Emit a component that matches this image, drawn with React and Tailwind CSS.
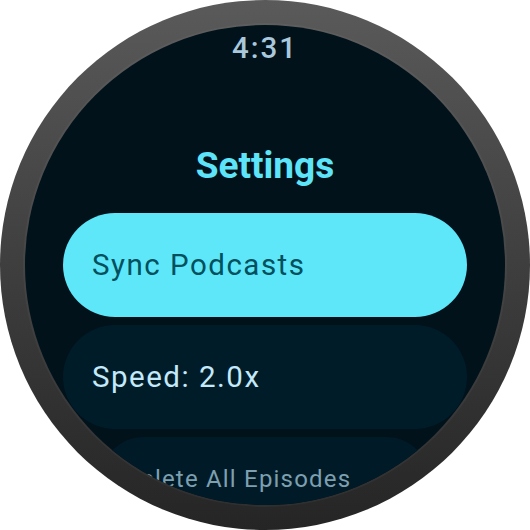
export default function App() {
  const font = { fontFamily: 'Roboto, "Noto Sans", sans-serif' };
  return (
    <div className="w-[530px] h-[530px] bg-white" style={font}>
      <div className="w-[530px] h-[530px] rounded-full bg-gradient-to-b from-[#5a5a5a] to-[#252525] p-[25px]">
        <div className="w-[480px] h-[480px] rounded-full bg-[#01121b] overflow-hidden flex flex-col items-center shadow-[0_0_0_2px_rgba(255,255,255,0.04)]">
          <div className="mt-[6px] text-[29.5px] leading-[34px] font-medium tracking-[2px] text-[#a9c8dc]">
            4:31
          </div>
          <div className="mt-[79px] text-[37px] leading-[43px] font-bold text-[#5de4f8]">
            Settings
          </div>
          <div className="mt-[26px] flex flex-col items-center gap-[8px]">
            <div className="w-[404px] h-[104px] shrink-0 rounded-full bg-[#5ee7f9] flex items-center px-[29px]">
              <span className="text-[29.5px] leading-[34px] tracking-[1.5px] text-[#00505d]">Sync Podcasts</span>
            </div>
            <div className="w-[404px] h-[104px] shrink-0 rounded-full bg-[#001c28] flex items-center px-[29px]">
              <span className="text-[29.5px] leading-[34px] tracking-[1.5px] text-[#c3e9fa]">Speed: 2.0x</span>
            </div>
            <div className="w-[328px] h-[84px] shrink-0 rounded-full bg-[#001b27] flex items-center px-[23px]">
              <span className="text-[24px] leading-[28px] tracking-[1.2px] text-[#7d9fb0] whitespace-nowrap">Delete All Episodes</span>
            </div>
          </div>
        </div>
      </div>
    </div>
  );
}
